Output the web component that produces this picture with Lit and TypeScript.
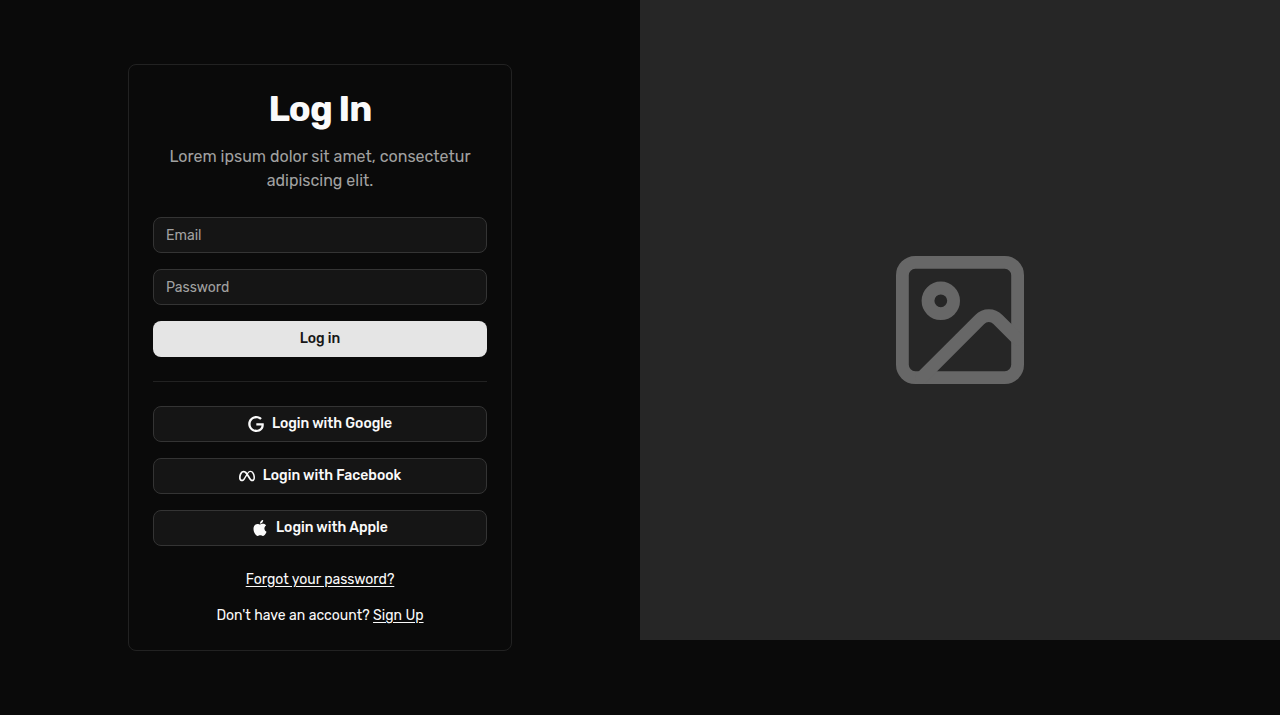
import { LitElement, html, css, svg } from "lit";
import { customElement, property } from "lit/decorators.js";

const glyphs: Record<string, string> = {
  google:
    "M12.48 10.92v3.28h7.84c-.24 1.84-.853 3.187-1.787 4.133-1.147 1.147-2.933 2.4-6.053 2.4-4.827 0-8.6-3.893-8.6-8.72s3.773-8.72 8.6-8.72c2.6 0 4.507 1.027 5.907 2.347l2.307-2.307C18.747 1.44 16.133 0 12.48 0 5.867 0 .307 5.387.307 12s5.56 12 12.173 12c3.573 0 6.267-1.173 8.373-3.36 2.16-2.16 2.84-5.213 2.84-7.667 0-.76-.053-1.467-.173-2.053H12.48z",
  facebook:
    "M6.915 4.03c-1.968 0-3.683 1.28-4.871 3.113C.704 9.208 0 11.883 0 14.449c0 .706.07 1.369.21 1.973a6.624 6.624 0 0 0 .265.86 5.297 5.297 0 0 0 .371.761c.696 1.159 1.818 1.927 3.593 1.927 1.497 0 2.633-.671 3.965-2.444.76-1.012 1.144-1.626 2.663-4.32l.756-1.339.186-.325c.061.1.121.196.183.3l2.152 3.595c.724 1.21 1.665 2.556 2.47 3.314 1.046.987 1.992 1.22 3.06 1.22 1.075 0 1.876-.355 2.455-.843a3.743 3.743 0 0 0 .81-.973c.542-.939.861-2.127.861-3.745 0-2.72-.681-5.357-2.084-7.45-1.282-1.912-2.957-2.93-4.716-2.93-1.047 0-2.088.467-3.053 1.308-.652.57-1.257 1.29-1.82 2.05-.69-.875-1.335-1.547-1.958-2.056-1.182-.966-2.315-1.303-3.454-1.303zm10.16 2.053c1.147 0 2.188.758 2.992 1.999 1.132 1.748 1.647 4.195 1.647 6.4 0 1.548-.368 2.9-1.839 2.9-.58 0-1.027-.23-1.664-1.004-.496-.601-1.343-1.878-2.832-4.358l-.617-1.028a44.908 44.908 0 0 0-1.255-1.98c.07-.109.141-.224.211-.327 1.12-1.667 2.118-2.602 3.358-2.602zm-10.201.553c1.265 0 2.058.791 2.675 1.446.307.327.737.871 1.234 1.579l-1.02 1.566c-.757 1.163-1.882 3.017-2.837 4.338-1.191 1.649-1.81 1.817-2.486 1.817-.524 0-1.038-.237-1.383-.794-.263-.426-.464-1.13-.464-2.046 0-2.221.63-4.535 1.66-6.088.454-.687.964-1.226 1.533-1.533a2.264 2.264 0 0 1 1.088-.285z",
  apple:
    "M12.152 6.896c-.948 0-2.415-1.078-3.96-1.04-2.04.027-3.91 1.183-4.961 3.014-2.117 3.675-.546 9.103 1.519 12.09 1.013 1.454 2.208 3.09 3.792 3.039 1.52-.065 2.09-.987 3.935-.987 1.831 0 2.35.987 3.96.948 1.637-.026 2.676-1.48 3.676-2.948 1.156-1.688 1.636-3.325 1.662-3.415-.039-.013-3.182-1.221-3.22-4.857-.026-3.04 2.48-4.494 2.597-4.559-1.429-2.09-3.623-2.324-4.39-2.376-2-.156-3.675 1.09-4.61 1.09zM15.53 3.83c.843-1.012 1.4-2.427 1.245-3.83-1.207.052-2.662.805-3.532 1.818-.78.896-1.454 2.273-1.286 3.65 1.338.104 2.715-.688 3.559-1.701",
};

@customElement("social-button")
export class SocialButton extends LitElement {
  @property() provider = "google";
  @property() label = "";

  static styles = css`
    :host { display: block; }
    .button {
      box-sizing: border-box;
      width: 100%;
      height: 36px;
      display: flex;
      align-items: center;
      justify-content: center;
      gap: 8px;
      padding: 0 12px;
      border: 1px solid #343434;
      border-radius: 8px;
      background: #151515;
      color: #fafafa;
      font: 500 14px/20px Rubik, Roboto, sans-serif;
      white-space: nowrap;
    }
    .icon { width: 16px; height: 16px; flex: none; fill: currentColor; }
    .label { display: block; padding-bottom: 1px; }
  `;

  render() {
    return html`
      <button class="button" type="button">
        <svg class="icon" viewBox="0 0 24 24" aria-hidden="true">
          ${svg`<path d=${glyphs[this.provider]}></path>`}
        </svg>
        <span class="label">${this.label}</span>
      </button>
    `;
  }
}

@customElement("app-root")
export class AppRoot extends LitElement {
  static styles = css`
    :host {
      display: block;
      min-height: 100vh;
      background: #0a0a0a;
      color: #fafafa;
      font-family: Rubik, Roboto, sans-serif;
    }
    .page { display: grid; grid-template-columns: 1fr 1fr; min-height: 100vh; }
    .side { display: flex; align-items: center; justify-content: center; }
    .card {
      box-sizing: border-box;
      width: 384px;
      padding: 24px;
      border: 1px solid #222;
      border-radius: 8px;
      display: flex;
      flex-direction: column;
      gap: 24px;
    }
    .head { display: flex; flex-direction: column; gap: 16px; text-align: center; }
    .title { margin: 0; font-size: 36px; line-height: 40px; font-weight: 700; letter-spacing: -0.9px; }
    .intro { margin: 0; font-size: 16px; line-height: 24px; color: #a1a1a1; }
    .stack { display: flex; flex-direction: column; gap: 16px; }
    .field {
      box-sizing: border-box;
      width: 100%;
      height: 36px;
      margin: 0;
      padding: 4px 12px;
      border: 1px solid #343434;
      border-radius: 8px;
      background: #151515;
      color: #fafafa;
      font: 400 14px/20px Rubik, Roboto, sans-serif;
      outline: none;
    }
    .field::placeholder { color: #a1a1a1; opacity: 1; }
    .submit {
      height: 36px;
      padding: 0 16px 1px;
      border: 0;
      border-radius: 8px;
      background: #e5e5e5;
      color: #171717;
      font: 500 14px/20px Rubik, Roboto, sans-serif;
    }
    .rule { height: 1px; background: #222; }
    .links { font-size: 14px; line-height: 20px; text-align: center; }
    .line { margin: 0; }
    .link { color: inherit; text-decoration: underline; text-underline-offset: 2px; }
    .media {
      align-self: start;
      aspect-ratio: 1;
      display: flex;
      align-items: center;
      justify-content: center;
      background: #262626;
    }
    .picture { width: 128px; height: 128px; color: #676767; }
  `;

  render() {
    return html`
      <main class="page">
        <section class="side">
          <div class="card">
            <header class="head">
              <h1 class="title">Log In</h1>
              <p class="intro">Lorem ipsum dolor sit amet, consectetur adipiscing elit.</p>
            </header>
            <div class="stack">
              <input class="field" type="email" placeholder="Email" />
              <input class="field" type="password" placeholder="Password" />
              <button class="submit" type="button">Log in</button>
            </div>
            <div class="rule"></div>
            <div class="stack">
              <social-button provider="google" label="Login with Google"></social-button>
              <social-button provider="facebook" label="Login with Facebook"></social-button>
              <social-button provider="apple" label="Login with Apple"></social-button>
            </div>
            <div class="stack links">
              <p class="line"><a class="link" href="#">Forgot your password?</a></p>
              <p class="line">Don't have an account? <a class="link" href="#">Sign Up</a></p>
            </div>
          </div>
        </section>
        <section class="media">
          <svg class="picture" viewBox="2 2 20 20" fill="none" stroke="currentColor" stroke-width="2" stroke-linecap="round" stroke-linejoin="round" aria-hidden="true">
            <rect x="3" y="3" width="18" height="18" rx="2"></rect>
            <circle cx="9" cy="9" r="2"></circle>
            <path d="m21 15-3.086-3.086a2 2 0 0 0-2.828 0L6 21"></path>
          </svg>
        </section>
      </main>
    `;
  }
}
